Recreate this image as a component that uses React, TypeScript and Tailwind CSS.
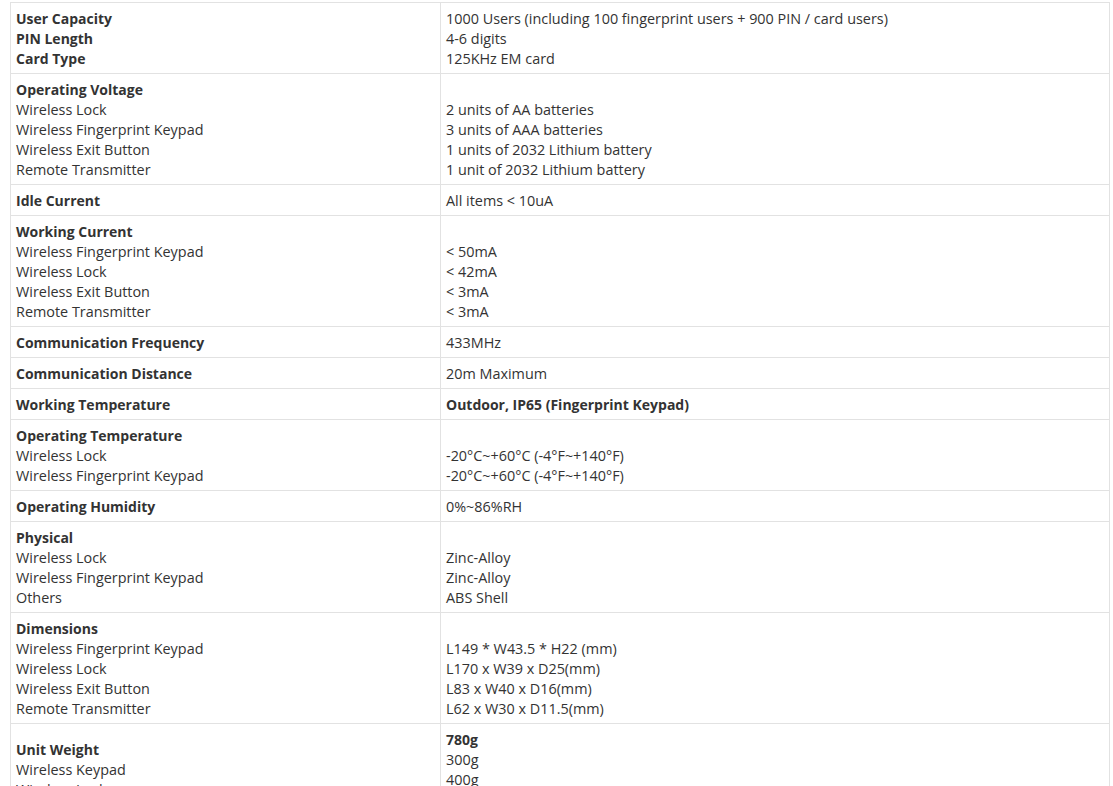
import React from 'react'

type Line = { t: string; b?: boolean }
type Row = { left: Line[]; right: Line[] }

const h = (t: string): Line => ({ t, b: true })
const n = (t: string): Line => ({ t })

const rows: Row[] = [
  {
    left: [h('User Capacity'), h('PIN Length'), h('Card Type')],
    right: [n('1000 Users (including 100 fingerprint users + 900 PIN / card users)'), n('4-6 digits'), n('125KHz EM card')],
  },
  {
    left: [h('Operating Voltage'), n('Wireless Lock'), n('Wireless Fingerprint Keypad'), n('Wireless Exit Button'), n('Remote Transmitter')],
    right: [n(''), n('2 units of AA batteries'), n('3 units of AAA batteries'), n('1 units of 2032 Lithium battery'), n('1 unit of 2032 Lithium battery')],
  },
  { left: [h('Idle Current')], right: [n('All items < 10uA')] },
  {
    left: [h('Working Current'), n('Wireless Fingerprint Keypad'), n('Wireless Lock'), n('Wireless Exit Button'), n('Remote Transmitter')],
    right: [n(''), n('< 50mA'), n('< 42mA'), n('< 3mA'), n('< 3mA')],
  },
  { left: [h('Communication Frequency')], right: [n('433MHz')] },
  { left: [h('Communication Distance')], right: [n('20m Maximum')] },
  { left: [h('Working Temperature')], right: [h('Outdoor, IP65 (Fingerprint Keypad)')] },
  {
    left: [h('Operating Temperature'), n('Wireless Lock'), n('Wireless Fingerprint Keypad')],
    right: [n(''), n('-20°C~+60°C (-4°F~+140°F)'), n('-20°C~+60°C (-4°F~+140°F)')],
  },
  { left: [h('Operating Humidity')], right: [n('0%~86%RH')] },
  {
    left: [h('Physical'), n('Wireless Lock'), n('Wireless Fingerprint Keypad'), n('Others')],
    right: [n(''), n('Zinc-Alloy'), n('Zinc-Alloy'), n('ABS Shell')],
  },
  {
    left: [h('Dimensions'), n('Wireless Fingerprint Keypad'), n('Wireless Lock'), n('Wireless Exit Button'), n('Remote Transmitter')],
    right: [n(''), n('L149 * W43.5 * H22 (mm)'), n('L170 x W39 x D25(mm)'), n('L83 x W40 x D16(mm)'), n('L62 x W30 x D11.5(mm)')],
  },
  {
    left: [h('Unit Weight'), n('Wireless Keypad'), n('Wireless Lock'), n('Remote Transmitter')],
    right: [h('780g'), n('300g'), n('400g'), n('20g'), n('60g')],
  },
]

function Cell({ lines, first }: { lines: Line[]; first?: boolean }) {
  return (
    <td className={`border border-[#e2e2e2] px-[5px] pt-[6px] pb-[4px] align-middle ${first ? 'w-[430px]' : ''}`}>
      {lines.map((l, i) => (
        <div key={i} className={`h-[20px] whitespace-nowrap ${l.b ? 'font-bold text-[14px]' : 'text-[14.4px]'}`}>
          {l.t}
        </div>
      ))}
    </td>
  )
}

export default function App() {
  return (
    <div className="bg-white min-h-screen pt-[2px] pl-[10px] text-[14px] leading-[20px] text-[#333] font-['Open_Sans','Noto_Sans',sans-serif]">
      <table className="w-[1100px] border-collapse">
        <tbody>
          {rows.map((r, i) => (
            <tr key={i}>
              <Cell lines={r.left} first />
              <Cell lines={r.right} />
            </tr>
          ))}
        </tbody>
      </table>
    </div>
  )
}
